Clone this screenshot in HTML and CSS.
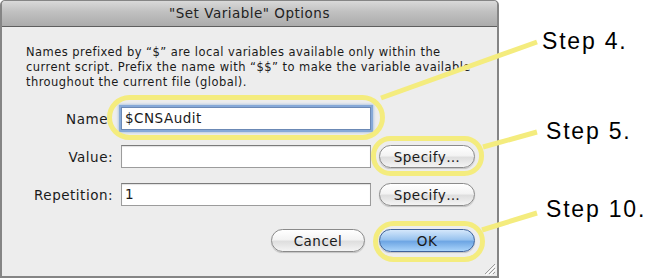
FILE: index.html
```html
<!DOCTYPE html>
<html>
<head>
<meta charset="utf-8">
<link rel="stylesheet" href="styles.css">
</head>
<body>
<div class="stage">
  <div class="window">
    <div class="titlebar">"Set Variable" Options</div>
    <div class="content">
      <p class="desc">Names prefixed by “$” are local variables available only within the<br>current script. Prefix the name with “$$” to make the variable available<br>throughout the current file (global).</p>
      <div class="form">
        <label class="lbl">Name:</label>
        <div class="field focus">$CNSAudit</div>
        <div></div>
        <label class="lbl">Value:</label>
        <div class="field"></div>
        <button class="btn">Specify…</button>
        <label class="lbl">Repetition:</label>
        <div class="field">1</div>
        <button class="btn">Specify…</button>
      </div>
      <div class="actions">
        <button class="btn cancel">Cancel</button>
        <button class="btn ok">OK</button>
      </div>
    </div>
    <svg class="grip" width="14" height="14" viewBox="0 0 14 14">
      <line x1="13" y1="3" x2="3" y2="13" stroke="#9a9a9a" stroke-width="1"/>
      <line x1="13" y1="7" x2="7" y2="13" stroke="#9a9a9a" stroke-width="1"/>
      <line x1="13" y1="11" x2="11" y2="13" stroke="#9a9a9a" stroke-width="1"/>
      <line x1="14" y1="4" x2="4" y2="14" stroke="#fff" stroke-width="1"/>
      <line x1="14" y1="8" x2="8" y2="14" stroke="#fff" stroke-width="1"/>
    </svg>
  </div>
  <svg class="annot" width="650" height="278" viewBox="0 0 650 278">
    <g fill="none" stroke="#f4ec7e" stroke-width="5">
      <rect x="109.5" y="97.5" width="273" height="40" rx="20"/>
      <rect x="373.5" y="138.5" width="108" height="35" rx="17"/>
      <rect x="375.5" y="223.5" width="107" height="36" rx="18"/>
      <line x1="381" y1="98" x2="537" y2="42"/>
      <line x1="483" y1="147" x2="537" y2="132"/>
      <line x1="482" y1="230" x2="537" y2="213"/>
    </g>
  </svg>
  <div class="step s4">Step 4.</div>
  <div class="step s5">Step 5.</div>
  <div class="step s10">Step 10.</div>
</div>
</body>
</html>
```
FILE: styles.css
```css
html, body {
  margin: 0;
  padding: 0;
  background: #fff;
}
.stage {
  position: relative;
  width: 650px;
  height: 278px;
  overflow: hidden;
  font-family: "DejaVu Sans", sans-serif;
  color: #1a1a1a;
}
.window {
  position: relative;
  box-sizing: border-box;
  width: 499px;
  height: 278px;
  border: 2px solid #858585;
  border-top-width: 1px;
  border-radius: 5px 5px 0 0;
  background: #ededed;
  display: flex;
  flex-direction: column;
}
.titlebar {
  box-sizing: border-box;
  height: 26px;
  border-bottom: 1px solid #5e5e5e;
  border-radius: 4px 4px 0 0;
  background: linear-gradient(#d9d9d9, #c2c2c2 40%, #ababab);
  text-align: center;
  font-size: 13.5px;
  letter-spacing: 0.5px;
  line-height: 25px;
  color: #222;
}
.content {
  padding: 18px 22px 0 24px;
}
.desc {
  margin: 0;
  font-size: 11.5px;
  letter-spacing: 0.45px;
  line-height: 15px;
  white-space: nowrap;
}
.form {
  margin-top: 17px;
  display: grid;
  grid-template-columns: 87px 250px 96px;
  grid-auto-rows: 23px;
  column-gap: 8px;
  row-gap: 15px;
  align-items: center;
}
.lbl {
  text-align: right;
  font-size: 13.5px;
  letter-spacing: 0.5px;
}
.field {
  box-sizing: border-box;
  height: 23px;
  background: #fff;
  border: 1px solid #9c9c9c;
  border-top-color: #7b7b7b;
  box-shadow: inset 0 1px 1px rgba(0,0,0,.12);
  font-size: 13.5px;
  letter-spacing: 0.5px;
  line-height: 21px;
  padding-left: 3px;
}
.field.focus {
  border-color: #6b89b5;
  box-shadow: 0 0 0 2px #86a9d8, 0 0 2px 3px rgba(134,169,216,.5);
}
.btn {
  box-sizing: border-box;
  height: 23px;
  padding: 0;
  border: 1px solid #8a8a8a;
  border-radius: 12px;
  background: linear-gradient(#ffffff, #f3f3f3 45%, #dedede 55%, #f4f4f4);
  box-shadow: 0 1px 1px rgba(0,0,0,.18);
  font-family: "DejaVu Sans", sans-serif;
  font-size: 13.5px;
  letter-spacing: 0.5px;
  color: #1a1a1a;
}
.actions {
  margin-top: 23px;
  display: flex;
  justify-content: flex-end;
  gap: 14px;
}
.cancel {
  width: 94px;
}
.ok {
  width: 96px;
  border-color: #3f629a;
  background: linear-gradient(#d4e7fb, #9ac4ef 45%, #6ea6e4 55%, #aad4fa);
}
.grip {
  position: absolute;
  right: 1px;
  bottom: 1px;
}
.annot {
  position: absolute;
  left: 0;
  top: 0;
  pointer-events: none;
}
.step {
  position: absolute;
  font-family: "Liberation Sans", Arial, sans-serif;
  font-size: 23px;
  line-height: 23px;
  letter-spacing: 1.8px;
  color: #000;
  white-space: nowrap;
}
.s4 { left: 542px; top: 30px; }
.s5 { left: 546px; top: 120px; }
.s10 { left: 546px; top: 198px; }
```
